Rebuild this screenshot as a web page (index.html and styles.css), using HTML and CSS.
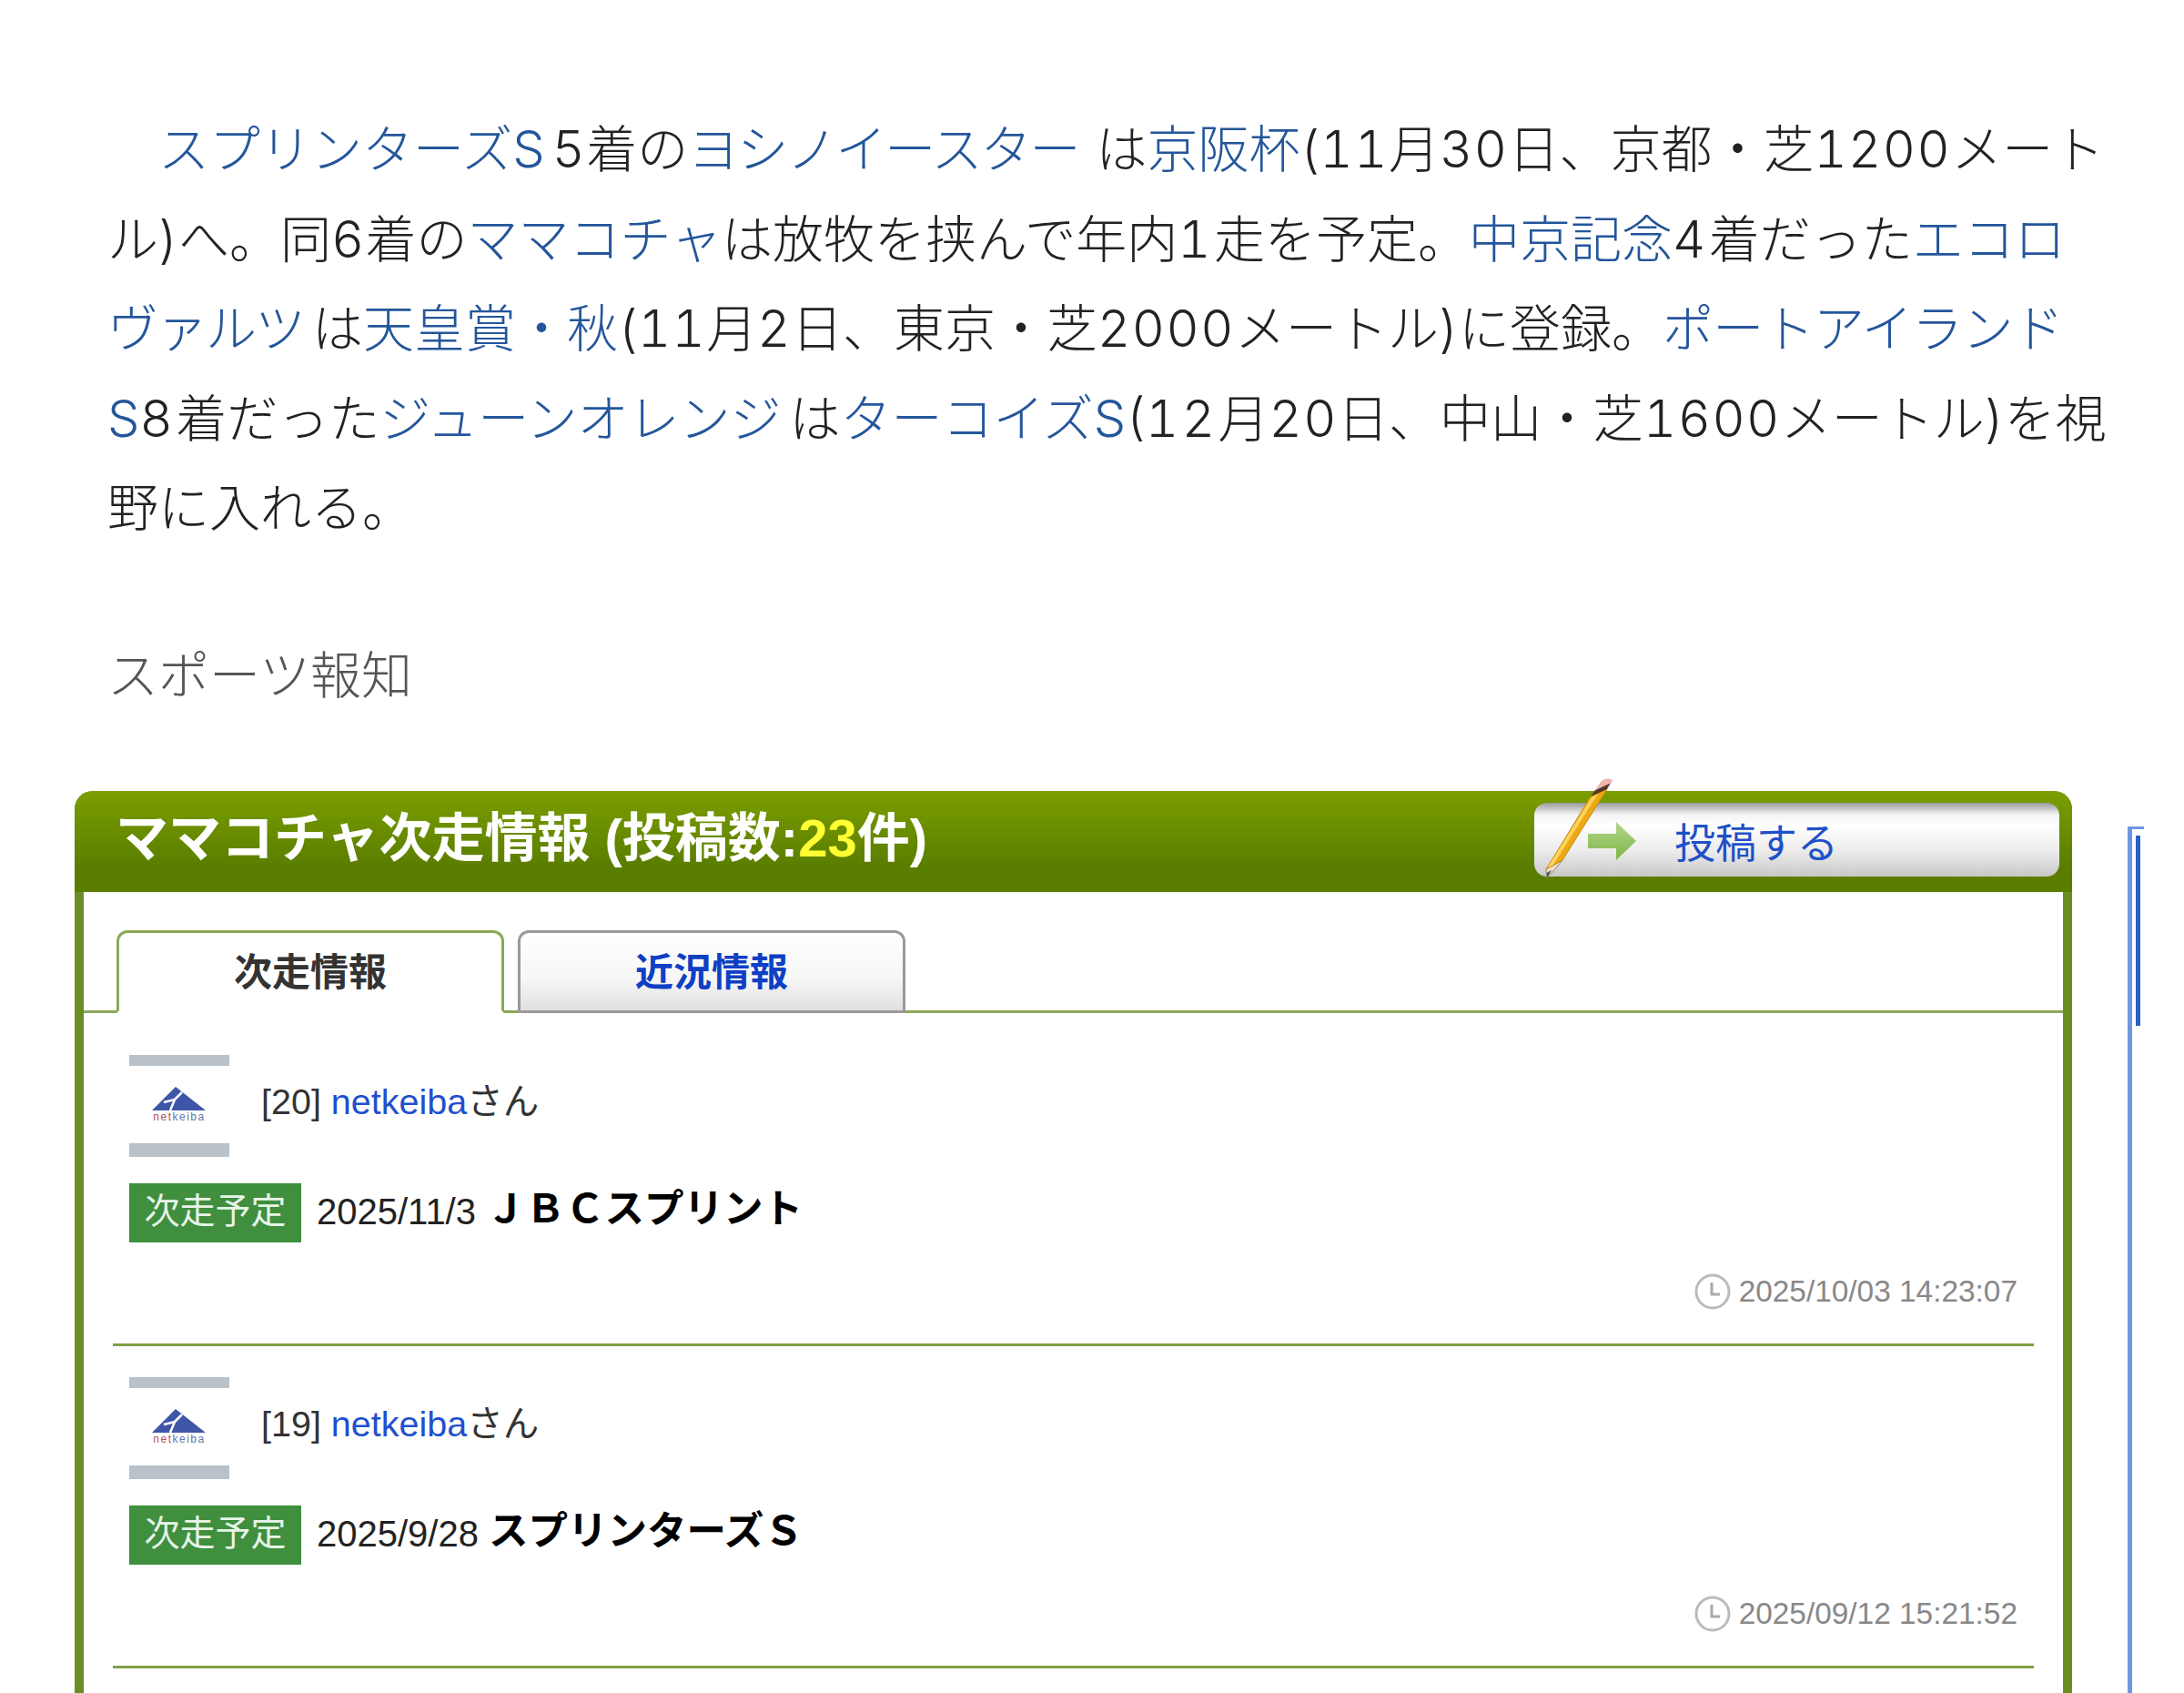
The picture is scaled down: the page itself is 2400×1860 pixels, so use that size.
FILE: index.html
```html
<!DOCTYPE html>
<html lang="ja">
<head>
<meta charset="utf-8">
<title>ママコチャ次走情報</title>
<link rel="stylesheet" href="styles.css">
</head>
<body>
<article class="article">
  <p class="lead"><a href="#">スプリンターズS</a><span class="gap"></span><span class="num">5</span>着の<a class="tight tight-end" href="#">ヨシノイースター</a> は<a href="#">京阪杯</a>(<span class="num">11</span>月<span class="num">30</span>日、京都・芝<span class="num">1200</span>メート<br>ル)へ。同<span class="num">6</span>着の<a href="#">ママコチャ</a>は放牧を挟んで年内<span class="num wide">1</span>走を予定。<a href="#">中京記念</a><span class="num wide">4</span>着だった<a href="#">エコロ</a><br><a class="tight" href="#">ヴァルツ</a><span class="gap-small"></span>は<a href="#">天皇賞・秋</a>(<span class="num">11</span>月<span class="num">2</span>日、東京・芝<span class="num">2000</span>メートル)に登録。<a class="snug" href="#">ポートアイランド</a><br><a href="#">S</a><span class="num wide">8</span>着だった<a href="#">ジューンオレンジ</a><span class="gap-small"></span>は<a href="#">ターコイズS</a>(<span class="num wide">12</span>月<span class="num">20</span>日、中山・芝<span class="num">1600</span>メートル)を視<br>野に入れる。</p>
  <p class="source">スポーツ報知</p>
</article>
<div class="lower">
  <section class="panel">
    <header class="panel-head">
      <h2 class="panel-title">ママコチャ次走情報 (投稿数:<span class="count">23</span>件)</h2>
      <a class="post-btn" href="#">
        <svg class="pencil" viewBox="0 0 90 112" width="90" height="112" aria-hidden="true">
          <path d="M10 110 L9 100 L27 90 Z" fill="#eadfca" stroke="#8f8a78" stroke-width="1"/>
          <path d="M10 110 L9.6 104 L15 101 Z" fill="#555"/>
          <path d="M9 100 L58 20 L76 12 L27 90 Z" fill="#eda814" stroke="#c98a10" stroke-width="1"/>
          <path d="M10 99 L59 21 L66 17 L17 95 Z" fill="#fcd45c"/>
          <path d="M58 20 L63 13 L80 5 L76 12 Z" fill="#57352f"/>
          <path d="M63 13 L69 4 Q74 -1 80 1 Q84 3 80 5 Z" fill="#eeb3ad"/>
        </svg>
        <svg class="arrow" viewBox="0 0 53 42" width="53" height="42" aria-hidden="true">
          <defs>
            <linearGradient id="arrowFill" x1="0" y1="0" x2="0" y2="1">
              <stop offset="0" stop-color="#b4d68b"/>
              <stop offset="1" stop-color="#7fb548"/>
            </linearGradient>
          </defs>
          <path d="M0 13 H31 V0 L53 21 L31 42 V29 H0 Z" fill="url(#arrowFill)"/>
        </svg>
        <span class="post-label">投稿する</span>
      </a>
    </header>
    <nav class="tabs">
      <a class="tab tab-active" href="#">次走情報</a>
      <a class="tab" href="#">近況情報</a>
    </nav>
    <div class="entries">
      <div class="entry">
        <div class="user">
          <div class="avatar">
            <svg viewBox="0 0 60 27" width="60" height="27" aria-hidden="true">
              <path d="M0 26 L26 0 L59 26 Z" fill="#3f55a8"/>
              <path d="M13 17 L25 14 L20 26 M25 14 L33 6" fill="none" stroke="#fff" stroke-width="2.5"/>
            </svg>
            <span class="avatar-name"><span class="avatar-red">net</span>keiba</span>
          </div>
          <span class="user-text">[20] <a href="#">netkeiba</a>さん</span>
        </div>
        <div class="race">
          <span class="badge">次走予定</span>
          <span class="race-date">2025/11/3</span>
          <span class="race-name">ＪＢＣスプリント</span>
        </div>
        <div class="time">
          <svg class="clock" viewBox="0 0 40 40" width="40" height="40" aria-hidden="true">
            <circle cx="20" cy="20" r="18" fill="none" stroke="#bbb" stroke-width="3"/>
            <path d="M19 10 V23 H28" fill="none" stroke="#aaa" stroke-width="3"/>
          </svg>
          <span>2025/10/03 14:23:07</span>
        </div>
      </div>
      <div class="entry">
        <div class="user">
          <div class="avatar">
            <svg viewBox="0 0 60 27" width="60" height="27" aria-hidden="true">
              <path d="M0 26 L26 0 L59 26 Z" fill="#3f55a8"/>
              <path d="M13 17 L25 14 L20 26 M25 14 L33 6" fill="none" stroke="#fff" stroke-width="2.5"/>
            </svg>
            <span class="avatar-name"><span class="avatar-red">net</span>keiba</span>
          </div>
          <span class="user-text">[19] <a href="#">netkeiba</a>さん</span>
        </div>
        <div class="race">
          <span class="badge">次走予定</span>
          <span class="race-date">2025/9/28</span>
          <span class="race-name">スプリンターズＳ</span>
        </div>
        <div class="time">
          <svg class="clock" viewBox="0 0 40 40" width="40" height="40" aria-hidden="true">
            <circle cx="20" cy="20" r="18" fill="none" stroke="#bbb" stroke-width="3"/>
            <path d="M19 10 V23 H28" fill="none" stroke="#aaa" stroke-width="3"/>
          </svg>
          <span>2025/09/12 15:21:52</span>
        </div>
      </div>
    </div>
  </section>
  <aside class="side"><div class="side-bar"></div></aside>
</div>
</body>
</html>
```
FILE: styles.css
```css
html, body {
  margin: 0;
  height: 1860px;
  overflow: hidden;
  background: #fff;
}
body {
  font-family: "Liberation Sans", "Noto Sans CJK JP", sans-serif;
  color: #333;
}
a { text-decoration: none; }
.article { padding: 115px 90px 0 118px; }
.lead {
  margin: 0;
  font-family: "Inter", "Noto Sans CJK JP", sans-serif;
  font-feature-settings: "tnum";
  font-size: 56px;
  font-weight: 300;
  line-height: 98.5px;
  text-indent: 56px;
  color: #222;
  white-space: nowrap;
}
.lead a { color: #24569b; }
.lead .tight { letter-spacing: -2px; }
.lead .tight-end { margin-right: 4px; }
.lead .snug { letter-spacing: -0.6px; }
.num { letter-spacing: 1.5px; }
.num.wide { letter-spacing: 3.5px; }
.gap { display: inline-block; width: 8px; }
.gap-small { display: inline-block; width: 9px; }
.source {
  margin: 95px 0 0;
  font-size: 56px;
  font-weight: 300;
  line-height: 80px;
  color: #555;
}
.lower {
  display: flex;
  margin-top: 86px;
  padding-left: 82px;
  align-items: flex-start;
}
.panel {
  width: 2195px;
  height: 991px;
  box-sizing: border-box;
  flex: none;
  border: solid #6b8e23;
  border-width: 0 10px;
  border-radius: 20px 20px 0 0;
}
.panel-head {
  display: flex;
  justify-content: space-between;
  align-items: center;
  height: 111px;
  margin: 0 -10px;
  padding: 0 14px 4px 45px;
  box-sizing: border-box;
  border-radius: 20px 20px 0 0;
  background: linear-gradient(#7b9e00, #5a7d00 75%);
}
.panel-title {
  margin: 0 0 12px;
  font-size: 58px;
  font-weight: 700;
  color: #fff;
  white-space: nowrap;
}
.count { color: #ffff33; }
.post-btn {
  position: relative;
  display: flex;
  align-items: center;
  width: 577px;
  height: 81px;
  box-sizing: border-box;
  padding-left: 154px;
  border-radius: 14px;
  background: linear-gradient(#9a9a9a, #f4f4f4 16%, #fff 30%, #ececec 65%, #c8c8c8);
  font-size: 45px;
  color: #1f50c8;
}
.post-label { padding-top: 2px; }
.pencil { position: absolute; left: 4px; top: -27px; }
.arrow { position: absolute; left: 59px; top: 21px; }
.tabs {
  display: flex;
  gap: 15px;
  margin-top: 42px;
  padding-left: 36px;
  border-bottom: 3px solid #8aa857;
}
.tab {
  display: flex;
  justify-content: center;
  align-items: center;
  width: 426px;
  height: 91px;
  box-sizing: border-box;
  margin-bottom: -3px;
  padding-bottom: 5px;
  border: 3px solid #999;
  border-radius: 12px 12px 0 0;
  background: linear-gradient(#fff, #f6f6f6 60%, #e0e0e0);
  font-size: 42px;
  font-weight: 700;
  color: #0f3fc4;
}
.tab-active {
  border-color: #8aa857;
  border-bottom: 3px solid #fff;
  background: #fff;
  color: #333;
}
.entries { padding: 12px 32px 0 32px; }
.entry {
  height: 317px;
  padding: 34px 0 0 18px;
  border-bottom: 3px solid #7f9f45;
}
.user {
  display: flex;
  align-items: center;
  gap: 35px;
}
.avatar {
  display: flex;
  flex-direction: column;
  align-items: center;
  justify-content: center;
  width: 110px;
  height: 85px;
  border-top: 12px solid #b9c2c8;
  border-bottom: 15px solid #b9c2c8;
}
.avatar-name {
  font-size: 12px;
  line-height: 12px;
  color: #5f78a8;
  letter-spacing: 1.5px;
}
.avatar-red { color: #b5505a; }
.user-text {
  padding-bottom: 17px;
  font-size: 39.5px;
  color: #333;
}
.user-text a { color: #1f50d0; }
.race {
  display: flex;
  align-items: center;
  gap: 17px;
  margin-top: 29px;
}
.badge {
  width: 189px;
  height: 65px;
  line-height: 62px;
  text-align: center;
  background: #3f8f3f;
  color: #e8f4e8;
  font-size: 39px;
}
.race-date { font-size: 40px; color: #222; padding-bottom: 2px; }
.race-name {
  margin-left: -6px;
  padding-bottom: 8px;
  font-size: 43.5px;
  line-height: 50px;
  font-weight: 700;
  color: #000;
}
.time {
  display: flex;
  justify-content: flex-end;
  align-items: center;
  gap: 9px;
  margin-top: 34px;
  padding-right: 18px;
  font-size: 33.4px;
  color: #888;
}
.side {
  flex: none;
  width: 9px;
  height: 950px;
  margin: 39px 0 0 61px;
  padding-left: 4px;
  border-top: 3px solid #6d97e2;
  border-left: 5px solid #6d97e2;
}
.side-bar {
  width: 5px;
  height: 209px;
  margin-top: 7px;
  background: #2b60c4;
}
```
